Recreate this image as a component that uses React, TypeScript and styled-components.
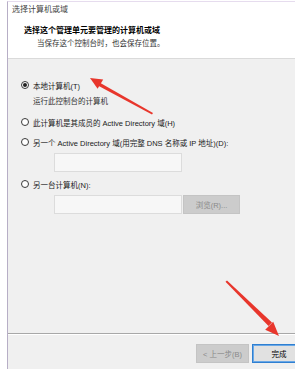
import React from 'react';
import styled, { createGlobalStyle } from 'styled-components';

const GlobalStyle = createGlobalStyle`
  html, body {
    margin: 0;
    padding: 0;
    background: #ffffff;
    overflow: hidden;
  }
  body {
    font-family: "Liberation Sans", "Noto Sans CJK SC", sans-serif;
    font-size: 7.5px;
    color: #1a1a1a;
  }
`;

const Page = styled.div`
  position: relative;
  width: 295px;
  height: 369px;
  padding-top: 1px;
  box-sizing: border-box;
  overflow: hidden;
`;

const Frame = styled.div`
  margin-left: 7px;
  height: 368px;
  width: 330px;
  box-sizing: border-box;
  border-left: 1px solid #b7aec6;
  border-top: 1px solid #e6dcee;
  display: flex;
  flex-direction: column;
`;

const Header = styled.div`
  background: #ffffff;
  padding: 3px 0 9px 4px;
  border-bottom: 1px solid #dadada;
  display: flex;
  flex-direction: column;
`;

const WindowTitle = styled.div`
  font-size: 8px;
  line-height: 10px;
  color: #444;
`;

const HeaderTitle = styled.div`
  margin: 11px 0 0 12px;
  font-size: 8px;
  line-height: 10px;
  font-weight: bold;
  color: #000;
`;

const HeaderSub = styled.div`
  margin: 3px 0 0 25px;
  line-height: 10px;
  color: #333;
`;

const Body = styled.div`
  flex: 1;
  background: #f0f0f0;
  padding: 20px 0 0 13px;
  display: flex;
  flex-direction: column;
`;

const OptionRow = styled.label<{ $gap: number }>`
  display: flex;
  align-items: center;
  gap: 4px;
  height: 12px;
  margin-top: ${(p) => p.$gap}px;
  color: #1a1a1a;
`;

const Radio = styled.span<{ $checked?: boolean }>`
  width: 8px;
  height: 8px;
  border: 1px solid #3a3a3a;
  border-radius: 50%;
  background: #fff;
  box-sizing: border-box;
  display: flex;
  align-items: center;
  justify-content: center;

  &::after {
    content: '';
    width: 4px;
    height: 4px;
    border-radius: 50%;
    background: ${(p) => (p.$checked ? '#222' : 'transparent')};
  }
`;

const Hint = styled.div`
  margin: 6px 0 0 12px;
  line-height: 10px;
  color: #333;
`;

const FieldRow = styled.div<{ $gap: number }>`
  display: flex;
  gap: 1px;
  margin: ${(p) => p.$gap}px 0 0 33px;
`;

const TextBox = styled.div`
  width: 128px;
  height: 19px;
  box-sizing: border-box;
  background: #f7f7f7;
  border: 1px solid #dcdcdc;
`;

const GreyButton = styled.div<{ $width: number }>`
  width: ${(p) => p.$width}px;
  height: 19px;
  box-sizing: border-box;
  background: #cccccc;
  border: 1px solid #c4c4c4;
  color: #8a8a8a;
  display: flex;
  align-items: center;
  justify-content: center;
`;

const Footer = styled.div`
  background: #f0f0f0;
  border-top: 1px solid #a8a8a8;
  box-shadow: inset 0 1px 0 #ffffff;
  height: 36px;
  box-sizing: border-box;
  padding: 10px 0 0 188px;
  display: flex;
  gap: 3px;
`;

const PrimaryButton = styled.div`
  width: 54px;
  height: 19px;
  box-sizing: border-box;
  background: #e1e1e1;
  border: 1px solid #2f7fd1;
  box-shadow: inset 0 0 0 1px #6aa8e6;
  color: #000;
  display: flex;
  align-items: center;
  justify-content: center;
`;

const Overlay = styled.svg`
  position: absolute;
  left: 0;
  top: 0;
  pointer-events: none;
`;

export default function App() {
  return (
    <>
      <GlobalStyle />
      <Page>
        <Frame>
          <Header>
            <WindowTitle>选择计算机或域</WindowTitle>
            <HeaderTitle>选择这个管理单元要管理的计算机或域</HeaderTitle>
            <HeaderSub>当保存这个控制台时，也会保存位置。</HeaderSub>
          </Header>
          <Body>
            <OptionRow $gap={0}>
              <Radio $checked />
              本地计算机(T)
            </OptionRow>
            <Hint>运行此控制台的计算机</Hint>
            <OptionRow $gap={9}>
              <Radio />
              此计算机是其成员的 Active Directory 域(H)
            </OptionRow>
            <OptionRow $gap={8}>
              <Radio />
              另一个 Active Directory 域(用完整 DNS 名称或 IP 地址)(D):
            </OptionRow>
            <FieldRow $gap={5}>
              <TextBox />
            </FieldRow>
            <OptionRow $gap={6}>
              <Radio />
              另一台计算机(N):
            </OptionRow>
            <FieldRow $gap={5}>
              <TextBox />
              <GreyButton $width={57}>浏览(R)...</GreyButton>
            </FieldRow>
          </Body>
          <Footer>
            <GreyButton $width={53}>&lt; 上一步(B)</GreyButton>
            <PrimaryButton>完成</PrimaryButton>
          </Footer>
        </Frame>
        <Overlay width="295" height="369" viewBox="0 0 295 369">
          <g fill="#e8362c" stroke="none">
            <polygon points="152,114.5 153,113 99.5,82.5 97.8,85.5" />
            <polygon points="90,78 103.2,79.5 97.6,88.8" />
            <polygon points="225.5,281.8 227,280.5 272,322.5 268.5,326" />
            <polygon points="279,336 265.2,329.8 273.2,321.8" />
          </g>
        </Overlay>
      </Page>
    </>
  );
}
